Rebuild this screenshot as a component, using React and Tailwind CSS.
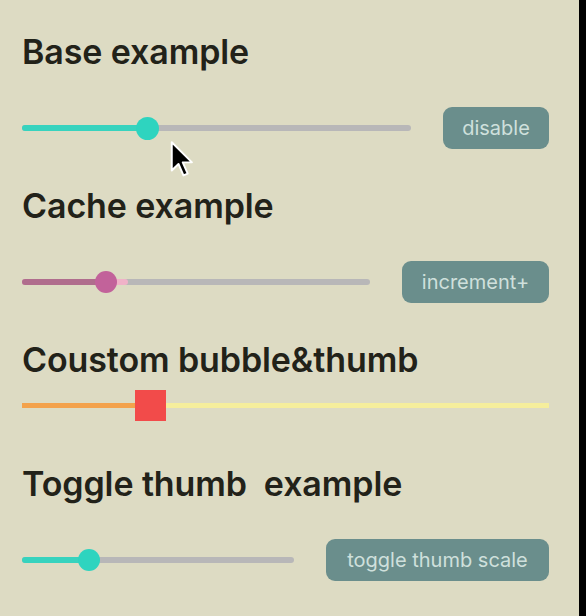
import React from 'react';

const font = { fontFamily: 'Inter, "Noto Sans", sans-serif' };

function Track({ children }) {
  return <div className="relative flex-1 h-[42px] flex items-center">{children}</div>;
}

function Btn({ label, w }) {
  return (
    <button
      className={`shrink-0 h-[42px] rounded-[9px] bg-[#6a8e8c] text-[#cfe0dc] text-[20px] ${w}`}
    >
      {label}
    </button>
  );
}

function Cursor() {
  return (
    <svg
      className="absolute left-[170px] top-[140px]"
      width="23"
      height="38"
      viewBox="-1 -1 13 21"
    >
      <path
        d="M0 0 L0 16 L3.8 12.3 L6.6 18.8 L9 17.8 L6.2 11.4 L11.4 11.4 Z"
        fill="#000"
        stroke="#fff"
        strokeWidth="1.1"
        strokeLinejoin="round"
      />
    </svg>
  );
}

const h2 = 'h-10 leading-10 text-[34px] font-semibold text-[#222219] tracking-[-0.1px]';

export default function App() {
  return (
    <div className="flex w-[586px] h-[616px] bg-[#dddbc3]" style={font}>
      <div className="relative flex-1 pt-[32px] pl-[22px] pr-[30px]">
        {/* Base example */}
        <h2 className={h2}>Base example</h2>
        <div className="mt-[35px] flex items-center gap-8">
          <Track>
            <div className="w-full h-[6px] rounded-full bg-[#b8b7b8]" />
            <div className="absolute left-0 w-[125px] h-[6px] rounded-full bg-[#37d3be]" />
            <div className="absolute left-[114px] w-[23px] h-[23px] rounded-full bg-[#2ed4bf]" />
          </Track>
          <Btn label="disable" w="w-[106px]" />
        </div>

        {/* Cache example */}
        <h2 className={`mt-[37px] ${h2}`}>Cache example</h2>
        <div className="mt-[35px] flex items-center gap-8">
          <Track>
            <div className="w-full h-[6px] rounded-full bg-[#b8b7b8]" />
            <div className="absolute left-0 w-[106px] h-[6px] rounded-full bg-[#f0b2c8]" />
            <div className="absolute left-0 w-[84px] h-[6px] rounded-full bg-[#b06d8d]" />
            <div className="absolute left-[73px] w-[22px] h-[22px] rounded-full bg-[#c2629a]" />
          </Track>
          <Btn label="increment+" w="w-[147px]" />
        </div>

        {/* Coustom bubble&thumb */}
        <h2 className={`mt-[37px] ${h2}`}>Coustom bubble&amp;thumb</h2>
        <div className="mt-[10px] relative h-[31px] flex items-center">
          <div className="w-full h-[5px] bg-[#f5ee9c]" />
          <div className="absolute left-0 w-[115px] h-[5px] bg-[#f3a24c]" />
          <div className="absolute left-[113px] top-0 w-[31px] h-[31px] bg-[#f24b4a]" />
        </div>

        {/* Toggle thumb example */}
        <h2 className={`mt-[43px] whitespace-pre ${h2}`}>Toggle thumb  example</h2>
        <div className="mt-[35px] flex items-center gap-8">
          <Track>
            <div className="w-full h-[6px] rounded-full bg-[#b8b7b8]" />
            <div className="absolute left-0 w-[66px] h-[6px] rounded-full bg-[#37d3be]" />
            <div className="absolute left-[56px] w-[22px] h-[22px] rounded-full bg-[#2ed4bf]" />
          </Track>
          <Btn label="toggle thumb scale" w="w-[223px]" />
        </div>

        <Cursor />
      </div>
      <div className="w-[7px] bg-black" />
    </div>
  );
}
